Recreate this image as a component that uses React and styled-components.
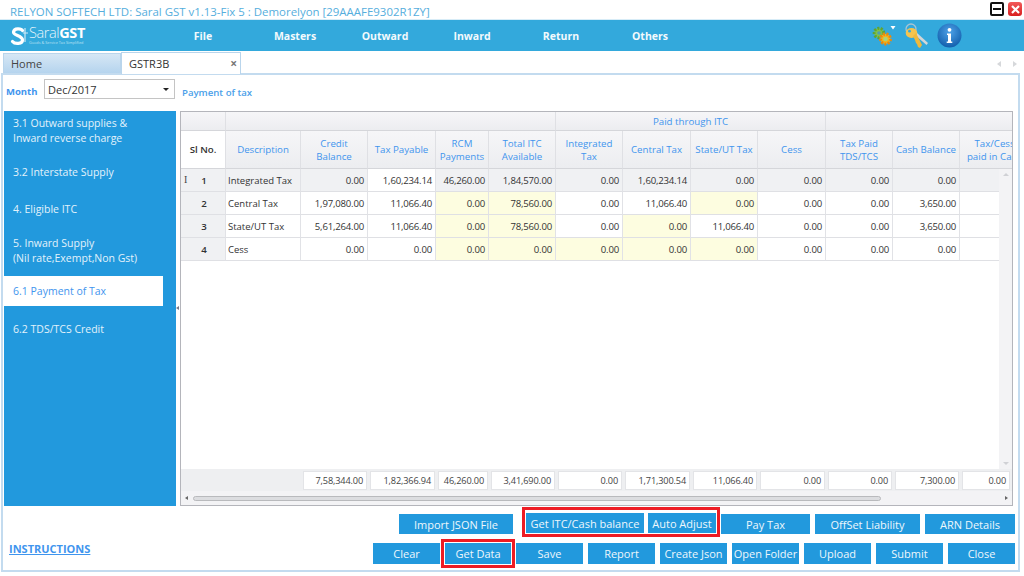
import React from "react";
import styled, { createGlobalStyle } from "styled-components";

const FONT = `"Open Sans", "Noto Sans", "Liberation Sans", sans-serif`;
const COLS = "45px 75px 67px 68px 53px 67px 67px 68px 67px 68px 67px 67px 70px";

const Global = createGlobalStyle`
  html, body { margin: 0; padding: 0; background: #fff; }
  body { width: 1024px; height: 576px; overflow: hidden; font-family: ${FONT}; }
  * { box-sizing: border-box; }
`;

const Page = styled.div`
  width: 1024px; height: 576px; display: flex; flex-direction: column; background: #fff; overflow: hidden;
`;
const TitleBar = styled.div`
  height: 19px; display: flex; align-items: center; padding: 1px 2px 0 10px; justify-content: space-between;
`;
const TitleText = styled.div`
  font-size: 11.45px; color: #55aedd; white-space: nowrap; padding-top: 2px;
`;
const WinButtons = styled.div`display: flex; gap: 4px; align-items: center; margin-top: -2px;`;
const MinBtn = styled.div`
  width: 14px; height: 14px; border: 2px solid #111; border-radius: 2px; display: flex; align-items: center; justify-content: center; background: #fff;
  &::before { content: ""; width: 8px; height: 2px; background: #111; }
`;
const CloseBtn = styled.div`
  width: 14px; height: 14px; border-radius: 3px; background: linear-gradient(#f25b5b, #d81f1f); display: flex; align-items: center; justify-content: center;
`;
const MenuBar = styled.div`
  height: 32px; background: #33a9dc; display: flex; align-items: center; border-top: 1px solid #d7ecf7;
`;
const Logo = styled.div`
  width: 158px; padding-left: 10px; display: flex; align-items: center; gap: 0; color: #fff;
`;
const LogoWords = styled.div`display: flex; flex-direction: column; line-height: 1;`;
const LogoName = styled.div`
  font-size: 14.5px; font-weight: 300; letter-spacing: -0.4px; color: #e6f4fb; b { font-weight: 700; color: #fff; }
`;
const LogoTag = styled.div`font-size: 3.8px; color: #bfe2f3; margin-top: 1px; white-space: nowrap;`;
const MenuItems = styled.div`display: flex; flex: 1;`;
const MenuItem = styled.div`
  width: ${p => p.$w}px; text-align: center; font-size: 10.5px; font-weight: 700; color: #f3fafd;
`;
const MenuIcons = styled.div`
  display: flex; align-items: center; padding-right: 62px; gap: 8px;
`;
const TabStrip = styled.div`
  height: 22px; display: flex; align-items: flex-end; padding-left: 3px; position: relative; z-index: 1;
`;
const HomeTab = styled.div`
  width: 118px; height: 20px; background: linear-gradient(#d6e7f5, #b5d4ee); border: 1px solid #b9d5ec; border-bottom: none;
  font-size: 11px; color: #444; padding: 2px 0 0 7px;
`;
const ActiveTab = styled.div`
  width: 120px; height: 22px; background: #fff; border: 1px solid #b9d5ec; border-bottom: none;
  font-size: 11px; color: #333; padding: 3px 3px 0 7px; display: flex; justify-content: space-between; margin-bottom: -1px;
`;
const TabClose = styled.span`font-size: 12px; font-weight: 700; color: #777; line-height: 15px;`;
const TabNav = styled.div`
  margin-left: auto; display: flex; gap: 12px; padding: 0 7px 6px 0;
`;
const NavArrow = styled.div`
  width: 0; height: 0; border-top: 3px solid transparent; border-bottom: 3px solid transparent;
  ${p => p.$left ? "border-right: 4px solid #d6d8db;" : "border-left: 4px solid #d6d8db;"}
`;
const Frame = styled.div`
  width: 1019px; height: 499px; margin-left: 1px; border: 2px solid #c3dbef; display: flex; flex-direction: column;
`;
const FilterRow = styled.div`
  height: 36px; display: flex; align-items: flex-start; padding: 4px 0 0 3px;
`;
const MonthLabel = styled.div`
  width: 38px; font-size: 9.5px; font-weight: 700; color: #3f95ee; padding-top: 6px;
`;
const MonthSelect = styled.div`
  width: 131px; height: 20px; border: 1px solid #c4c4c4; font-size: 11px; color: #333; padding: 0 3px; display: flex; align-items: center; justify-content: space-between;
  &::after { content: ""; border-left: 3px solid transparent; border-right: 3px solid transparent; border-top: 3px solid #222; margin-right: 2px; }
`;
const PageHeading = styled.div`
  margin-left: 7px; font-size: 9.6px; font-weight: 600; color: #4b9fe9; padding-top: 7px;
`;
const Main = styled.div`
  height: 395px; display: flex; padding-left: 1px;
`;
const Sidebar = styled.div`
  width: 172px; background: #2299dd; display: flex; flex-direction: column; padding-top: 1px;
`;
const SideItem = styled.div`
  width: 159px; height: ${p => p.$h}px; padding: ${p => p.$pt || 0}px 0 0 9px; display: flex; align-items: center; flex: none;
  font-size: 10.5px; line-height: 15px; color: ${p => p.$active ? "#3f95ee" : "#e3f2fb"}; background: ${p => p.$active ? "#fff" : "transparent"};
`;
const Splitter = styled.div`
  width: 4px; display: flex; align-items: center;
  &::before { content: ""; margin-top: -1px; border-top: 2px solid transparent; border-bottom: 2px solid transparent; border-right: 3px solid #778; }
`;
const Grid = styled.div`
  width: 833px; border: 1px solid #b4b5bb; display: flex; flex-direction: column; overflow: hidden; background: #fff;
`;
const HeadRow = styled.div`
  display: grid; grid-template-columns: ${COLS}; height: ${p => p.$h}px; flex: none; width: 900px;
`;
const HeadCell = styled.div`
  grid-column: span ${p => p.$span || 1};
  background: ${p => p.$white ? "#fff" : "linear-gradient(#f6f6f8, #ecedf0)"};
  border-right: 1px solid #dfe0e4; border-bottom: 1px solid #d5d6da;
  display: flex; align-items: center; justify-content: center; text-align: center;
  font-size: 9.7px; line-height: 13px; color: ${p => p.$white ? "#333" : "#3f95ee"}; font-weight: ${p => p.$white ? 600 : 400};
  white-space: nowrap; overflow: hidden;
`;
const BodyWrap = styled.div`flex: 1; display: flex; min-height: 0;`;
const Rows = styled.div`flex: 1; overflow: hidden; min-width: 0;`;
const Row = styled.div`
  display: grid; grid-template-columns: ${COLS}; height: 23px; width: 900px;
`;
const Cell = styled.div`
  background: ${p => ({ grey: "#f0f1f3", yellow: "#fdfde0", white: "#fff" }[p.$tone])};
  border-right: 1px solid #e1e2e6; border-bottom: 1px solid #dfe0e4;
  font-size: ${p => p.$text ? "9.5px" : "9.6px"}; letter-spacing: ${p => p.$text ? "0" : "-0.2px"}; color: #333; display: flex; align-items: center; white-space: nowrap; overflow: hidden;
  justify-content: ${p => p.$text ? "flex-start" : "flex-end"}; padding: ${p => p.$text ? "1px 0 0 2px" : "1px 3px 0 0"};
`;
const SlCell = styled(Cell)`
  justify-content: center; padding: 1px 0 0 2px; font-weight: 600; font-size: 9.7px; position: relative;
`;
const RowCursor = styled.span`
  position: absolute; left: 3px; top: 5px; font-family: "Liberation Serif", serif; font-size: 10px; font-weight: 400; color: #444;
`;
const VScroll = styled.div`
  width: 13px; flex: none; background: #f3f3f5; display: flex; flex-direction: column; justify-content: space-between; align-items: center; padding: 4px 0;
`;
const VArrow = styled.div`
  width: 0; height: 0; border-left: 3px solid transparent; border-right: 3px solid transparent;
  ${p => p.$up ? "border-bottom: 3px solid #d0d1d5;" : "border-top: 3px solid #d0d1d5;"}
`;
const Totals = styled.div`
  height: 22px; background: #eeeff1; flex: none; overflow: hidden; padding-top: 2px;
`;
const TotalsRow = styled.div`
  display: grid; grid-template-columns: ${COLS}; width: 900px; height: 19px;
`;
const TotalSpacer = styled.div`grid-column: span 2;`;
const TotalCell = styled.div`
  background: #fff; border: 1px solid #e3e4e7; margin: 0 1px 0 2px; font-size: 9.2px; letter-spacing: -0.15px; color: #444;
  display: flex; align-items: center; justify-content: flex-end; padding-right: 3px;
  &:last-child { width: 48px; }
`;
const HScroll = styled.div`
  height: 14px; background: #f3f3f5; flex: none; display: flex; align-items: center; padding: 0 4px; gap: 5px;
`;
const HArrow = styled.div`
  width: 0; height: 0; flex: none; border-top: 2.5px solid transparent; border-bottom: 2.5px solid transparent;
  ${p => p.$left ? "border-right: 3px solid #666;" : "border-left: 3px solid #666; margin-left: auto;"}
`;
const HThumb = styled.div`
  width: 688px; height: 5px; border: 1px solid #b9babd; border-radius: 3px; background: #dcdde0;
`;
const Actions = styled.div`
  flex: 1; display: flex; justify-content: space-between; padding: 1px 3px 0 6px;
`;
const Instructions = styled.a`
  font-size: 11px; font-weight: 700; color: #3f95ee; text-decoration: underline; align-self: flex-start; margin-top: 34px;
`;
const ButtonRows = styled.div`display: flex; flex-direction: column; align-items: flex-end; gap: 1px;`;
const TopButtons = styled.div`
  display: flex; gap: 5px; align-items: flex-start; height: 31px; padding-top: 7px;
`;
const BottomButtons = styled.div`
  display: flex; gap: 5px; align-items: center; height: 29px;
`;
const Btn = styled.button`
  width: ${p => p.$w}px; height: ${p => p.$h || 21}px; border: none; padding: 0; background: #2299dd; color: #eef7fc; flex: none;
  font-family: ${FONT}; font-size: 11px; white-space: nowrap; overflow: hidden;
  margin-right: ${p => p.$mr || 0}px;
`;
const RedBox = styled.div`
  border: 3px solid #ed1c24; padding: ${p => p.$pad}; display: flex; gap: ${p => p.$gap || 0}px; margin: ${p => p.$m};
`;

const Gears = () => (
  <svg width="24" height="22" viewBox="0 0 24 22">
    <circle cx="7" cy="8" r="4.8" fill="#7fc04a" stroke="#5fa432" strokeWidth="3" strokeDasharray="2 1.4" />
    <circle cx="7" cy="8" r="1.8" fill="#4f9fb0" />
    <circle cx="13.5" cy="14" r="5" fill="#f6b21b" stroke="#e8890f" strokeWidth="3" strokeDasharray="2 1.4" />
    <circle cx="13.5" cy="14" r="2.3" fill="#a9d47a" />
    <path d="M18.5 1h5L21 4.5z" fill="#fff" />
  </svg>
);
const KeyIcon = () => (
  <svg width="25" height="26" viewBox="0 0 25 26">
    <circle cx="7" cy="6" r="5" fill="none" stroke="#a9c4d3" strokeWidth="1.3" />
    <path d="M12 9l12 11-1.5 2L11 12z" fill="#d3d6d7" />
    <ellipse cx="7.5" cy="10" rx="5.8" ry="5" fill="#f5c44f" />
    <path d="M9 13l3-3 5 10 1 2-2 3-2-1-1-3-1-1-1-3z" fill="#f0b93c" />
    <circle cx="5.5" cy="8.2" r="1.4" fill="#33a9dc" />
  </svg>
);
const InfoIcon = () => (
  <svg width="25" height="25" viewBox="0 0 25 25">
    <defs>
      <radialGradient id="infoBlue" cx="50%" cy="35%" r="70%">
        <stop offset="0" stopColor="#4ea2e8" />
        <stop offset="1" stopColor="#0e5aa8" />
      </radialGradient>
    </defs>
    <circle cx="12.5" cy="12.5" r="12" fill="url(#infoBlue)" />
    <circle cx="12.5" cy="6.8" r="1.9" fill="#fff" />
    <path d="M10 10.5h4v8h1.3v1.5H9.7v-1.5H11v-6.5h-1z" fill="#fff" />
  </svg>
);
const LogoMark = () => (
  <svg width="19" height="22" viewBox="0 0 19 22">
    <path d="M12.5 5.5C11.5 3.5 4 2.5 3.5 7c-.4 3.5 9 3.5 9 8 0 4-7.5 4.5-10 1.5" fill="none" stroke="#fff" strokeWidth="3.2" strokeLinecap="round" />
    <path d="M15 3v14M13 8h5" fill="none" stroke="#cfe9f6" strokeWidth="1.2" />
  </svg>
);

const Y = "yellow", W = "white", G = "grey";
const rows = [
  { n: "1", d: "Integrated Tax", grey: true, cursor: true, c: [["0.00", G], ["1,60,234.14", W], ["46,260.00", G], ["1,84,570.00", G], ["0.00", G], ["1,60,234.14", G], ["0.00", G], ["0.00", G], ["0.00", G], ["0.00", G], ["", G]] },
  { n: "2", d: "Central Tax", c: [["1,97,080.00", W], ["11,066.40", W], ["0.00", Y], ["78,560.00", Y], ["0.00", W], ["11,066.40", W], ["0.00", Y], ["0.00", W], ["0.00", W], ["3,650.00", W], ["", W]] },
  { n: "3", d: "State/UT Tax", c: [["5,61,264.00", W], ["11,066.40", W], ["0.00", Y], ["78,560.00", Y], ["0.00", W], ["0.00", Y], ["11,066.40", W], ["0.00", W], ["0.00", W], ["3,650.00", W], ["", W]] },
  { n: "4", d: "Cess", c: [["0.00", W], ["0.00", W], ["0.00", Y], ["0.00", Y], ["0.00", Y], ["0.00", Y], ["0.00", Y], ["0.00", W], ["0.00", W], ["0.00", W], ["", W]] },
];
const heads = ["Description", "Credit\nBalance", "Tax Payable", "RCM\nPayments", "Total ITC\nAvailable", "Integrated\nTax", "Central Tax", "State/UT Tax", "Cess", "Tax Paid\nTDS/TCS", "Cash Balance", "Tax/Cess\npaid in Cash"];
const totals = ["7,58,344.00", "1,82,366.94", "46,260.00", "3,41,690.00", "0.00", "1,71,300.54", "11,066.40", "0.00", "0.00", "7,300.00", "0.00"];
const side = [
  { t: ["3.1 Outward supplies &", "Inward reverse charge"], h: 37 },
  { t: ["3.2 Interstate Supply"], h: 46 },
  { t: ["4. Eligible ITC"], h: 28 },
  { t: ["5. Inward Supply", "(Nil rate,Exempt,Non Gst)"], h: 53, pt: 2 },
  { t: ["6.1 Payment of Tax"], h: 30, active: true, pt: 1 },
  { t: ["6.2 TDS/TCS Credit"], h: 46 },
];
const menu = [["File", 90], ["Masters", 94], ["Outward", 86], ["Inward", 88], ["Return", 90], ["Others", 88]];
const lines = s => s.split("\n").map((l, i) => <React.Fragment key={i}>{i > 0 && <br />}{l}</React.Fragment>);

export default function App() {
  return (
    <Page>
      <Global />
      <TitleBar>
        <TitleText>RELYON SOFTECH LTD: Saral GST v1.13-Fix 5 : Demorelyon [29AAAFE9302R1ZY]</TitleText>
        <WinButtons>
          <MinBtn />
          <CloseBtn>
            <svg width="9" height="9" viewBox="0 0 9 9"><path d="M1 1l7 7M8 1l-7 7" stroke="#fff" strokeWidth="2.2" /></svg>
          </CloseBtn>
        </WinButtons>
      </TitleBar>
      <MenuBar>
        <Logo>
          <LogoMark />
          <LogoWords>
            <LogoName>Saral<b>GST</b></LogoName>
            <LogoTag>Goods &amp; Service Tax Simplified</LogoTag>
          </LogoWords>
        </Logo>
        <MenuItems>
          {menu.map(([m, w]) => <MenuItem key={m} $w={w}>{m}</MenuItem>)}
        </MenuItems>
        <MenuIcons>
          <Gears />
          <KeyIcon />
          <InfoIcon />
        </MenuIcons>
      </MenuBar>
      <TabStrip>
        <HomeTab>Home</HomeTab>
        <ActiveTab>GSTR3B<TabClose>×</TabClose></ActiveTab>
        <TabNav><NavArrow $left /><NavArrow /></TabNav>
      </TabStrip>
      <Frame>
        <FilterRow>
          <MonthLabel>Month</MonthLabel>
          <MonthSelect>Dec/2017</MonthSelect>
          <PageHeading>Payment of tax</PageHeading>
        </FilterRow>
        <Main>
          <Sidebar>
            {side.map(s => (
              <SideItem key={s.t[0]} $h={s.h} $active={s.active} $pt={s.pt}>
                <div>{s.t.map((l, i) => <React.Fragment key={i}>{i > 0 && <br />}{l}</React.Fragment>)}</div>
              </SideItem>
            ))}
          </Sidebar>
          <Splitter />
          <Grid>
            <HeadRow $h={19}>
              <HeadCell />
              <HeadCell $span={5} />
              <HeadCell $span={4}>Paid through ITC</HeadCell>
              <HeadCell $span={3} />
            </HeadRow>
            <HeadRow $h={38}>
              <HeadCell $white>Sl No.</HeadCell>
              {heads.map(h => <HeadCell key={h}><div>{lines(h)}</div></HeadCell>)}
            </HeadRow>
            <BodyWrap>
              <Rows>
                {rows.map(r => (
                  <Row key={r.n}>
                    <SlCell $tone={G}>{r.cursor && <RowCursor>I</RowCursor>}{r.n}</SlCell>
                    <Cell $text $tone={r.grey ? G : W}>{r.d}</Cell>
                    {r.c.map((c, i) => <Cell key={i} $tone={c[1]}>{c[0]}</Cell>)}
                  </Row>
                ))}
              </Rows>
              <VScroll><VArrow $up /><VArrow /></VScroll>
            </BodyWrap>
            <Totals>
              <TotalsRow>
                <TotalSpacer />
                {totals.map((t, i) => <TotalCell key={i}>{t}</TotalCell>)}
              </TotalsRow>
            </Totals>
            <HScroll><HArrow $left /><HThumb /><HArrow /></HScroll>
          </Grid>
        </Main>
        <Actions>
          <Instructions>INSTRUCTIONS</Instructions>
          <ButtonRows>
            <TopButtons>
              <Btn $w={114} $h={20} $mr={4}>Import JSON File</Btn>
              <RedBox $gap={4} $pad="3px 1px 1px" $m="-7px -4px 0 0">
                <Btn $w={118} $h={20}>Get ITC/Cash balance</Btn>
                <Btn $w={68} $h={20}>Auto Adjust</Btn>
              </RedBox>
              <Btn $w={89} $h={20}>Pay Tax</Btn>
              <Btn $w={105} $h={20}>OffSet Liability</Btn>
              <Btn $w={90} $h={20}>ARN Details</Btn>
            </TopButtons>
            <BottomButtons>
              <Btn $w={67}>Clear</Btn>
              <RedBox $pad="1px" $m="0 -4px">
                <Btn $w={66}>Get Data</Btn>
              </RedBox>
              {["Save", "Report", "Create Json", "Open Folder", "Upload", "Submit", "Close"].map(b => <Btn key={b} $w={67}>{b}</Btn>)}
            </BottomButtons>
          </ButtonRows>
        </Actions>
      </Frame>
    </Page>
  );
}
